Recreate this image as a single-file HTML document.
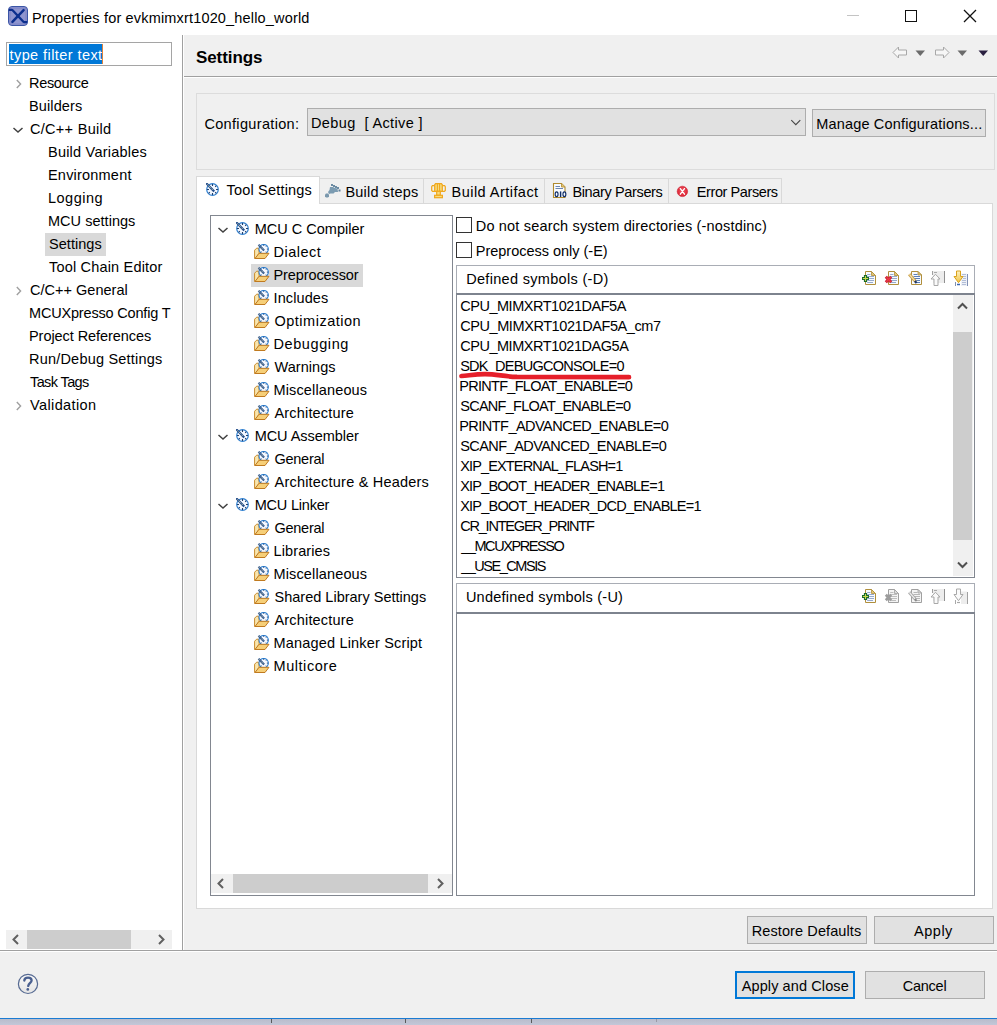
<!DOCTYPE html><html><head><meta charset="utf-8"><style>html,body{margin:0;padding:0;width:997px;height:1025px;overflow:hidden;position:relative;font-family:"Liberation Sans",sans-serif;}.t{position:absolute;white-space:pre;line-height:20px;z-index:5;}</style></head><body>
<div style="position:absolute;left:0px;top:0px;width:997px;height:35px;background:#ffffff;z-index:0;"></div>
<div style="position:absolute;left:0px;top:35px;width:997px;height:983px;background:#f0f0f0;z-index:0;"></div>
<div style="position:absolute;left:0px;top:35px;width:182px;height:915px;background:#ffffff;z-index:0;"></div>
<div style="position:absolute;left:182px;top:35px;width:1px;height:915px;background:#a0a0a0;z-index:1;"></div>
<div style="position:absolute;left:0px;top:950px;width:997px;height:1px;background:#a0a0a0;z-index:1;"></div>
<div style="position:absolute;left:0px;top:951px;width:997px;height:1px;background:#ffffff;z-index:1;"></div>
<div style="position:absolute;left:183px;top:35px;width:1px;height:915px;background:#ffffff;z-index:1;"></div>
<div style="position:absolute;left:0px;top:1018px;width:997px;height:1px;background:#1a7bd3;z-index:1;"></div>
<div style="position:absolute;left:0px;top:1019px;width:997px;height:6px;background:linear-gradient(#b9bccb,#c3c7d8);z-index:1;"></div>
<div style="position:absolute;left:271px;top:1019px;width:1px;height:4px;background:#5a5a5a;z-index:2;"></div>
<div style="position:absolute;left:405px;top:1019px;width:1px;height:4px;background:#5a5a5a;z-index:2;"></div>
<div style="position:absolute;left:531px;top:1019px;width:1px;height:4px;background:#5a5a5a;z-index:2;"></div>
<div style="position:absolute;left:656px;top:1019px;width:1px;height:3px;background:#9a9aa6;z-index:2;"></div>
<svg style="position:absolute;left:8px;top:6px;z-index:4" width="20" height="20" viewBox="0 0 20 20"><rect x="0.5" y="0.5" width="19" height="19" rx="3.5" fill="#8f95cf" stroke="#3b55a6" stroke-width="1"/>
<rect x="2" y="2" width="16" height="16" rx="2" fill="none" stroke="#7a82c4" stroke-width="1"/>
<path d="M0.8 3.8 L3.6 3.8 L4.6 4.3 L15.4 15.7 L16.4 16.2 L19.2 16.2" fill="none" stroke="#0c2f8e" stroke-width="2.3" stroke-linejoin="round"/>
<path d="M15.6 4.2 L4.4 15.8" fill="none" stroke="#0c2f8e" stroke-width="2.5" stroke-linecap="round"/></svg>
<div style="position:absolute;left:847px;top:15px;width:12px;height:1px;background:#c4c4c4;z-index:3;"></div>
<div style="position:absolute;left:905px;top:10px;width:12px;height:12px;border:1.3px solid #111;box-sizing:border-box;z-index:3;"></div>
<svg style="position:absolute;left:963px;top:9px;z-index:4" width="14" height="14" viewBox="0 0 14 14"><path d="M1 1 L13 13 M13 1 L1 13" stroke="#111" stroke-width="1.3"/></svg>
<div style="position:absolute;left:6px;top:42px;width:166px;height:24px;background:#fff;border:1px solid #a5a5a5;box-sizing:border-box;z-index:2;"></div>
<div style="position:absolute;left:9px;top:44px;width:94px;height:20px;background:#0078d7;z-index:3;"></div>
<div style="position:absolute;left:102px;top:44px;width:1px;height:20px;background:#e0813a;z-index:3;"></div>
<svg style="position:absolute;left:14.5px;top:78px;z-index:4" width="8" height="12" viewBox="0 0 8 12"><path d="M1.8 2 L5.6 6 L1.8 10" fill="none" stroke="#a0a0a0" stroke-width="1.4"/></svg>
<svg style="position:absolute;left:12.3px;top:125.5px;z-index:4" width="12" height="8" viewBox="0 0 12 8"><path d="M1.5 2 L6 6 L10.5 2" fill="none" stroke="#404040" stroke-width="1.5"/></svg>
<div style="position:absolute;left:45px;top:233px;width:61px;height:23px;background:#d9d9d9;z-index:2;"></div>
<svg style="position:absolute;left:14.5px;top:285px;z-index:4" width="8" height="12" viewBox="0 0 8 12"><path d="M1.8 2 L5.6 6 L1.8 10" fill="none" stroke="#a0a0a0" stroke-width="1.4"/></svg>
<svg style="position:absolute;left:14.5px;top:400px;z-index:4" width="8" height="12" viewBox="0 0 8 12"><path d="M1.8 2 L5.6 6 L1.8 10" fill="none" stroke="#a0a0a0" stroke-width="1.4"/></svg>
<div style="position:absolute;left:6px;top:930px;width:166px;height:19px;background:#f0f0f0;z-index:2;"></div>
<div style="position:absolute;left:27px;top:930px;width:104px;height:19px;background:#cdcdcd;z-index:3;"></div>
<svg style="position:absolute;left:10px;top:933px;z-index:4" width="12" height="13" viewBox="0 0 12 13"><path d="M8 2 L3.5 6.5 L8 11" fill="none" stroke="#606060" stroke-width="2"/></svg>
<svg style="position:absolute;left:155px;top:933px;z-index:4" width="12" height="13" viewBox="0 0 12 13"><path d="M4 2 L8.5 6.5 L4 11" fill="none" stroke="#606060" stroke-width="2"/></svg>
<svg style="position:absolute;left:17px;top:973px;z-index:4" width="22" height="22" viewBox="0 0 22 22"><defs><linearGradient id="hg" x1="0" y1="0" x2="0" y2="1"><stop offset="0" stop-color="#fafafa"/><stop offset="1" stop-color="#e4e4e4"/></linearGradient></defs>
<circle cx="11" cy="10.9" r="9.6" fill="url(#hg)" stroke="#566a92" stroke-width="1.2"/>
<path d="M7.3 7.6 C7.4 5.4 9 4.7 11 4.7 C13.2 4.7 14.6 5.9 14.6 7.5 C14.6 9.6 11.8 10.1 11.2 12.9" fill="none" stroke="#4a6090" stroke-width="2.3" stroke-linecap="round"/>
<circle cx="10.8" cy="16.4" r="1.35" fill="#4a6090"/></svg>
<svg style="position:absolute;left:892px;top:46px;z-index:4" width="16" height="14" viewBox="0 0 16 14"><path d="M1 6.5 L6.5 1 L6.5 4 L14.5 4 L14.5 9 L6.5 9 L6.5 12 Z" fill="#f6f6f6" stroke="#a8a8a8" stroke-width="1"/></svg>
<svg style="position:absolute;left:915px;top:50px;z-index:4" width="11" height="7" viewBox="0 0 11 7"><path d="M0.5 0.5 L10 0.5 L5.25 6 Z" fill="#6b6b6b"/></svg>
<svg style="position:absolute;left:934px;top:46px;z-index:4" width="16" height="14" viewBox="0 0 16 14"><path d="M15 6.5 L9.5 1 L9.5 4 L1.5 4 L1.5 9 L9.5 9 L9.5 12 Z" fill="#f6f6f6" stroke="#a8a8a8" stroke-width="1"/></svg>
<svg style="position:absolute;left:957px;top:50px;z-index:4" width="11" height="7" viewBox="0 0 11 7"><path d="M0.5 0.5 L10 0.5 L5.25 6 Z" fill="#6b6b6b"/></svg>
<svg style="position:absolute;left:978px;top:50px;z-index:4" width="11" height="7" viewBox="0 0 11 7"><path d="M0.5 0.5 L10 0.5 L5.25 6 Z" fill="#2a2040"/></svg>
<div style="position:absolute;left:184px;top:76px;width:813px;height:1px;background:#a0a0a0;z-index:2;"></div>
<div style="position:absolute;left:184px;top:77px;width:813px;height:1px;background:#ffffff;z-index:2;"></div>
<div style="position:absolute;left:196px;top:93px;width:799px;height:77px;border:1px solid #dcdcdc;box-sizing:border-box;z-index:2;"></div>
<div style="position:absolute;left:307px;top:108px;width:499px;height:28px;background:#e1e1e1;border:1px solid #adadad;box-sizing:border-box;z-index:2;"></div>
<svg style="position:absolute;left:790px;top:119px;z-index:4" width="12" height="8" viewBox="0 0 12 8"><path d="M1.3 1.2 L5.8 5.7 L10.3 1.2" fill="none" stroke="#444" stroke-width="1.1"/></svg>
<div style="position:absolute;left:812px;top:109px;width:174px;height:28px;background:#e1e1e1;border:1px solid #adadad;box-sizing:border-box;z-index:2;"></div>
<div style="position:absolute;left:196px;top:203px;width:797px;height:706px;background:#ffffff;border:1px solid #d9d9d9;box-sizing:border-box;z-index:1;"></div>
<div style="position:absolute;left:196px;top:176px;width:124px;height:28px;background:#ffffff;border:1px solid #d9d9d9;box-sizing:border-box;z-index:2;border-bottom:none;"></div>
<div style="position:absolute;left:319px;top:178px;width:105px;height:26px;background:#f0f0f0;border:1px solid #d9d9d9;box-sizing:border-box;z-index:1;"></div>
<div style="position:absolute;left:423px;top:178px;width:122px;height:26px;background:#f0f0f0;border:1px solid #d9d9d9;box-sizing:border-box;z-index:1;"></div>
<div style="position:absolute;left:544px;top:178px;width:125px;height:26px;background:#f0f0f0;border:1px solid #d9d9d9;box-sizing:border-box;z-index:1;"></div>
<div style="position:absolute;left:668px;top:178px;width:114px;height:26px;background:#f0f0f0;border:1px solid #d9d9d9;box-sizing:border-box;z-index:1;"></div>
<svg style="position:absolute;left:206px;top:183px;z-index:4" width="13" height="13" viewBox="0 0 13 13">
<circle cx="6.5" cy="6.5" r="5.8" fill="#f4f8ff" stroke="#2f7fcf" stroke-width="1.2"/>
<path d="M6.5 1 V3 M6.5 10 V12 M1 6.5 H3 M10 6.5 H12 M2.7 10.3 L3.8 9.2 M10.3 10.3 L9.2 9.2 M10.3 2.7 L9.2 3.8" stroke="#1f3f6e" stroke-width="1.1"/>
<path d="M1 1 L7.4 7.6" stroke="#27508c" stroke-width="2.3" stroke-linecap="square"/>
<path d="M1.6 1.6 L7 7.2" stroke="#efe9b4" stroke-width="1" stroke-dasharray="1 1"/>
</svg>
<svg style="position:absolute;left:324px;top:183px;z-index:4" width="17" height="16" viewBox="0 0 17 16"><path d="M1 11.5 L2 10.5 L4 10.5 L5 11.5 L5 13.5 L4 14.5 L2 14.5 L1 13.5 Z" fill="#7a98ad"/>
<path d="M4 9 L5.5 7 L6 4 L9 4 L11 5 L13.5 5.5 L14 9 L11 9 L9.5 10.5 L6.5 10.5 L5 11 Z" fill="#7b9bb1"/>
<rect x="7" y="1" width="2" height="2" fill="#6b8ba3"/><rect x="9" y="2" width="2" height="2" fill="#6b8ba3"/>
<rect x="11" y="3" width="2" height="2" fill="#6b8ba3"/><rect x="13" y="4" width="2" height="2" fill="#6b8ba3"/><rect x="14.5" y="6.5" width="2" height="2" fill="#5f7f99"/></svg>
<svg style="position:absolute;left:428px;top:180px;z-index:4" width="20" height="20" viewBox="0 0 20 20"><path d="M6.8 5.6 H4.4 L3.7 6.6 V10.4 L4.6 11.4 H6.8 M14.2 5.6 H16.6 L17.3 6.6 V10.4 L16.4 11.4 H14.2" fill="none" stroke="#f0a81e" stroke-width="1.25"/>
<path d="M7.6 3.6 H13.4 L14.3 4.8 V11.3 H6.7 V4.8 Z" fill="#f7dc7c" stroke="#f0a81e" stroke-width="1.25"/>
<path d="M9.4 4 V11 M11.6 4 V11" stroke="#f0a81e" stroke-width="1.1"/>
<rect x="8.7" y="11.3" width="3.6" height="4" fill="#f7dc7c" stroke="#f0a81e" stroke-width="1.2"/>
<rect x="6.6" y="15.3" width="7.8" height="2.4" fill="#f7dc7c" stroke="#f0a81e" stroke-width="1.2"/></svg>
<svg style="position:absolute;left:552px;top:182px;z-index:4" width="15" height="17" viewBox="0 0 15 17"><path d="M1.5 1.5 H9.5 L13 5 V15.5 H1.5 Z" fill="#f8fbff" stroke="#b08a2e" stroke-width="1.1"/>
<path d="M9.5 1.5 V5 H13" fill="#e6c77a" stroke="#b08a2e" stroke-width="0.8"/>
<path d="M3.5 4.5 H8 M3.5 6.5 H11" stroke="#5a77a8" stroke-width="0.9"/>
<ellipse cx="4.6" cy="12.2" rx="1.45" ry="2.35" fill="none" stroke="#0e2c66" stroke-width="1.15"/><rect x="7.9" y="9.4" width="1.4" height="5.6" fill="#0e2c66"/><ellipse cx="12.4" cy="12.2" rx="1.45" ry="2.35" fill="#f8fbff" stroke="#0e2c66" stroke-width="1.15"/></svg>
<svg style="position:absolute;left:676px;top:185px;z-index:4" width="13" height="13" viewBox="0 0 13 13"><defs><radialGradient id="eg" cx="0.5" cy="0.45" r="0.6"><stop offset="0" stop-color="#f25a66"/><stop offset="1" stop-color="#d81b2c"/></radialGradient></defs>
<circle cx="6.4" cy="6.4" r="5.2" fill="url(#eg)" stroke="#cc2030" stroke-width="0.6"/>
<path d="M4.3 3.6 L8.5 9.2 M8.5 3.6 L4.3 9.2" stroke="#fff" stroke-width="1.3" stroke-linecap="round"/></svg>
<div style="position:absolute;left:210px;top:215px;width:243px;height:681px;background:#ffffff;border:1px solid #828790;box-sizing:border-box;z-index:2;"></div>
<svg style="position:absolute;left:216.6px;top:225.5px;z-index:4" width="12" height="8" viewBox="0 0 12 8"><path d="M1.5 2 L6 6 L10.5 2" fill="none" stroke="#404040" stroke-width="1.5"/></svg>
<svg style="position:absolute;left:236px;top:222px;z-index:4" width="13" height="13" viewBox="0 0 13 13">
<circle cx="6.5" cy="6.5" r="5.8" fill="#f4f8ff" stroke="#2f7fcf" stroke-width="1.2"/>
<path d="M6.5 1 V3 M6.5 10 V12 M1 6.5 H3 M10 6.5 H12 M2.7 10.3 L3.8 9.2 M10.3 10.3 L9.2 9.2 M10.3 2.7 L9.2 3.8" stroke="#1f3f6e" stroke-width="1.1"/>
<path d="M1 1 L7.4 7.6" stroke="#27508c" stroke-width="2.3" stroke-linecap="square"/>
<path d="M1.6 1.6 L7 7.2" stroke="#efe9b4" stroke-width="1" stroke-dasharray="1 1"/>
</svg>
<svg style="position:absolute;left:254px;top:244px;z-index:4" width="16" height="16" viewBox="0 0 16 16">
<path d="M0.6 14.5 V6.2 L2.6 4.2 L4.6 4.2 L5.2 9.2 L1.5 14.5 Z" fill="#f9e6ae" stroke="#c98a2c" stroke-width="1"/>
<circle cx="9.7" cy="5.1" r="4.7" fill="#f6f9ff" stroke="#3586d6" stroke-width="1.1"/>
<path d="M9.7 0.6 V1.9 M14.2 5.1 H12.9 M6.6 8.4 L7.4 7.6 M12.8 8.4 L12 7.6 M12.8 1.8 L12 2.6" stroke="#1f3f6e" stroke-width="0.9"/>
<path d="M1 14.5 L5 9.3 L15 9.3 L11 14.5 Z" fill="#f6cf78" stroke="#c07a20" stroke-width="1"/>
<path d="M4.5 0.8 L10.1 6.5" stroke="#27508c" stroke-width="2.1"/>
<path d="M5 1.3 L9.7 6.1" stroke="#efe9b4" stroke-width="0.9" stroke-dasharray="1 1"/>
</svg>
<div style="position:absolute;left:251px;top:263.5px;width:112px;height:23px;background:#d9d9d9;z-index:3;"></div>
<svg style="position:absolute;left:254px;top:267px;z-index:4" width="16" height="16" viewBox="0 0 16 16">
<path d="M0.6 14.5 V6.2 L2.6 4.2 L4.6 4.2 L5.2 9.2 L1.5 14.5 Z" fill="#f9e6ae" stroke="#c98a2c" stroke-width="1"/>
<circle cx="9.7" cy="5.1" r="4.7" fill="#f6f9ff" stroke="#3586d6" stroke-width="1.1"/>
<path d="M9.7 0.6 V1.9 M14.2 5.1 H12.9 M6.6 8.4 L7.4 7.6 M12.8 8.4 L12 7.6 M12.8 1.8 L12 2.6" stroke="#1f3f6e" stroke-width="0.9"/>
<path d="M1 14.5 L5 9.3 L15 9.3 L11 14.5 Z" fill="#f6cf78" stroke="#c07a20" stroke-width="1"/>
<path d="M4.5 0.8 L10.1 6.5" stroke="#27508c" stroke-width="2.1"/>
<path d="M5 1.3 L9.7 6.1" stroke="#efe9b4" stroke-width="0.9" stroke-dasharray="1 1"/>
</svg>
<svg style="position:absolute;left:254px;top:290px;z-index:4" width="16" height="16" viewBox="0 0 16 16">
<path d="M0.6 14.5 V6.2 L2.6 4.2 L4.6 4.2 L5.2 9.2 L1.5 14.5 Z" fill="#f9e6ae" stroke="#c98a2c" stroke-width="1"/>
<circle cx="9.7" cy="5.1" r="4.7" fill="#f6f9ff" stroke="#3586d6" stroke-width="1.1"/>
<path d="M9.7 0.6 V1.9 M14.2 5.1 H12.9 M6.6 8.4 L7.4 7.6 M12.8 8.4 L12 7.6 M12.8 1.8 L12 2.6" stroke="#1f3f6e" stroke-width="0.9"/>
<path d="M1 14.5 L5 9.3 L15 9.3 L11 14.5 Z" fill="#f6cf78" stroke="#c07a20" stroke-width="1"/>
<path d="M4.5 0.8 L10.1 6.5" stroke="#27508c" stroke-width="2.1"/>
<path d="M5 1.3 L9.7 6.1" stroke="#efe9b4" stroke-width="0.9" stroke-dasharray="1 1"/>
</svg>
<svg style="position:absolute;left:254px;top:313px;z-index:4" width="16" height="16" viewBox="0 0 16 16">
<path d="M0.6 14.5 V6.2 L2.6 4.2 L4.6 4.2 L5.2 9.2 L1.5 14.5 Z" fill="#f9e6ae" stroke="#c98a2c" stroke-width="1"/>
<circle cx="9.7" cy="5.1" r="4.7" fill="#f6f9ff" stroke="#3586d6" stroke-width="1.1"/>
<path d="M9.7 0.6 V1.9 M14.2 5.1 H12.9 M6.6 8.4 L7.4 7.6 M12.8 8.4 L12 7.6 M12.8 1.8 L12 2.6" stroke="#1f3f6e" stroke-width="0.9"/>
<path d="M1 14.5 L5 9.3 L15 9.3 L11 14.5 Z" fill="#f6cf78" stroke="#c07a20" stroke-width="1"/>
<path d="M4.5 0.8 L10.1 6.5" stroke="#27508c" stroke-width="2.1"/>
<path d="M5 1.3 L9.7 6.1" stroke="#efe9b4" stroke-width="0.9" stroke-dasharray="1 1"/>
</svg>
<svg style="position:absolute;left:254px;top:336px;z-index:4" width="16" height="16" viewBox="0 0 16 16">
<path d="M0.6 14.5 V6.2 L2.6 4.2 L4.6 4.2 L5.2 9.2 L1.5 14.5 Z" fill="#f9e6ae" stroke="#c98a2c" stroke-width="1"/>
<circle cx="9.7" cy="5.1" r="4.7" fill="#f6f9ff" stroke="#3586d6" stroke-width="1.1"/>
<path d="M9.7 0.6 V1.9 M14.2 5.1 H12.9 M6.6 8.4 L7.4 7.6 M12.8 8.4 L12 7.6 M12.8 1.8 L12 2.6" stroke="#1f3f6e" stroke-width="0.9"/>
<path d="M1 14.5 L5 9.3 L15 9.3 L11 14.5 Z" fill="#f6cf78" stroke="#c07a20" stroke-width="1"/>
<path d="M4.5 0.8 L10.1 6.5" stroke="#27508c" stroke-width="2.1"/>
<path d="M5 1.3 L9.7 6.1" stroke="#efe9b4" stroke-width="0.9" stroke-dasharray="1 1"/>
</svg>
<svg style="position:absolute;left:254px;top:359px;z-index:4" width="16" height="16" viewBox="0 0 16 16">
<path d="M0.6 14.5 V6.2 L2.6 4.2 L4.6 4.2 L5.2 9.2 L1.5 14.5 Z" fill="#f9e6ae" stroke="#c98a2c" stroke-width="1"/>
<circle cx="9.7" cy="5.1" r="4.7" fill="#f6f9ff" stroke="#3586d6" stroke-width="1.1"/>
<path d="M9.7 0.6 V1.9 M14.2 5.1 H12.9 M6.6 8.4 L7.4 7.6 M12.8 8.4 L12 7.6 M12.8 1.8 L12 2.6" stroke="#1f3f6e" stroke-width="0.9"/>
<path d="M1 14.5 L5 9.3 L15 9.3 L11 14.5 Z" fill="#f6cf78" stroke="#c07a20" stroke-width="1"/>
<path d="M4.5 0.8 L10.1 6.5" stroke="#27508c" stroke-width="2.1"/>
<path d="M5 1.3 L9.7 6.1" stroke="#efe9b4" stroke-width="0.9" stroke-dasharray="1 1"/>
</svg>
<svg style="position:absolute;left:254px;top:382px;z-index:4" width="16" height="16" viewBox="0 0 16 16">
<path d="M0.6 14.5 V6.2 L2.6 4.2 L4.6 4.2 L5.2 9.2 L1.5 14.5 Z" fill="#f9e6ae" stroke="#c98a2c" stroke-width="1"/>
<circle cx="9.7" cy="5.1" r="4.7" fill="#f6f9ff" stroke="#3586d6" stroke-width="1.1"/>
<path d="M9.7 0.6 V1.9 M14.2 5.1 H12.9 M6.6 8.4 L7.4 7.6 M12.8 8.4 L12 7.6 M12.8 1.8 L12 2.6" stroke="#1f3f6e" stroke-width="0.9"/>
<path d="M1 14.5 L5 9.3 L15 9.3 L11 14.5 Z" fill="#f6cf78" stroke="#c07a20" stroke-width="1"/>
<path d="M4.5 0.8 L10.1 6.5" stroke="#27508c" stroke-width="2.1"/>
<path d="M5 1.3 L9.7 6.1" stroke="#efe9b4" stroke-width="0.9" stroke-dasharray="1 1"/>
</svg>
<svg style="position:absolute;left:254px;top:405px;z-index:4" width="16" height="16" viewBox="0 0 16 16">
<path d="M0.6 14.5 V6.2 L2.6 4.2 L4.6 4.2 L5.2 9.2 L1.5 14.5 Z" fill="#f9e6ae" stroke="#c98a2c" stroke-width="1"/>
<circle cx="9.7" cy="5.1" r="4.7" fill="#f6f9ff" stroke="#3586d6" stroke-width="1.1"/>
<path d="M9.7 0.6 V1.9 M14.2 5.1 H12.9 M6.6 8.4 L7.4 7.6 M12.8 8.4 L12 7.6 M12.8 1.8 L12 2.6" stroke="#1f3f6e" stroke-width="0.9"/>
<path d="M1 14.5 L5 9.3 L15 9.3 L11 14.5 Z" fill="#f6cf78" stroke="#c07a20" stroke-width="1"/>
<path d="M4.5 0.8 L10.1 6.5" stroke="#27508c" stroke-width="2.1"/>
<path d="M5 1.3 L9.7 6.1" stroke="#efe9b4" stroke-width="0.9" stroke-dasharray="1 1"/>
</svg>
<svg style="position:absolute;left:216.6px;top:432.5px;z-index:4" width="12" height="8" viewBox="0 0 12 8"><path d="M1.5 2 L6 6 L10.5 2" fill="none" stroke="#404040" stroke-width="1.5"/></svg>
<svg style="position:absolute;left:236px;top:429px;z-index:4" width="13" height="13" viewBox="0 0 13 13">
<circle cx="6.5" cy="6.5" r="5.8" fill="#f4f8ff" stroke="#2f7fcf" stroke-width="1.2"/>
<path d="M6.5 1 V3 M6.5 10 V12 M1 6.5 H3 M10 6.5 H12 M2.7 10.3 L3.8 9.2 M10.3 10.3 L9.2 9.2 M10.3 2.7 L9.2 3.8" stroke="#1f3f6e" stroke-width="1.1"/>
<path d="M1 1 L7.4 7.6" stroke="#27508c" stroke-width="2.3" stroke-linecap="square"/>
<path d="M1.6 1.6 L7 7.2" stroke="#efe9b4" stroke-width="1" stroke-dasharray="1 1"/>
</svg>
<svg style="position:absolute;left:254px;top:451px;z-index:4" width="16" height="16" viewBox="0 0 16 16">
<path d="M0.6 14.5 V6.2 L2.6 4.2 L4.6 4.2 L5.2 9.2 L1.5 14.5 Z" fill="#f9e6ae" stroke="#c98a2c" stroke-width="1"/>
<circle cx="9.7" cy="5.1" r="4.7" fill="#f6f9ff" stroke="#3586d6" stroke-width="1.1"/>
<path d="M9.7 0.6 V1.9 M14.2 5.1 H12.9 M6.6 8.4 L7.4 7.6 M12.8 8.4 L12 7.6 M12.8 1.8 L12 2.6" stroke="#1f3f6e" stroke-width="0.9"/>
<path d="M1 14.5 L5 9.3 L15 9.3 L11 14.5 Z" fill="#f6cf78" stroke="#c07a20" stroke-width="1"/>
<path d="M4.5 0.8 L10.1 6.5" stroke="#27508c" stroke-width="2.1"/>
<path d="M5 1.3 L9.7 6.1" stroke="#efe9b4" stroke-width="0.9" stroke-dasharray="1 1"/>
</svg>
<svg style="position:absolute;left:254px;top:474px;z-index:4" width="16" height="16" viewBox="0 0 16 16">
<path d="M0.6 14.5 V6.2 L2.6 4.2 L4.6 4.2 L5.2 9.2 L1.5 14.5 Z" fill="#f9e6ae" stroke="#c98a2c" stroke-width="1"/>
<circle cx="9.7" cy="5.1" r="4.7" fill="#f6f9ff" stroke="#3586d6" stroke-width="1.1"/>
<path d="M9.7 0.6 V1.9 M14.2 5.1 H12.9 M6.6 8.4 L7.4 7.6 M12.8 8.4 L12 7.6 M12.8 1.8 L12 2.6" stroke="#1f3f6e" stroke-width="0.9"/>
<path d="M1 14.5 L5 9.3 L15 9.3 L11 14.5 Z" fill="#f6cf78" stroke="#c07a20" stroke-width="1"/>
<path d="M4.5 0.8 L10.1 6.5" stroke="#27508c" stroke-width="2.1"/>
<path d="M5 1.3 L9.7 6.1" stroke="#efe9b4" stroke-width="0.9" stroke-dasharray="1 1"/>
</svg>
<svg style="position:absolute;left:216.6px;top:501.5px;z-index:4" width="12" height="8" viewBox="0 0 12 8"><path d="M1.5 2 L6 6 L10.5 2" fill="none" stroke="#404040" stroke-width="1.5"/></svg>
<svg style="position:absolute;left:236px;top:498px;z-index:4" width="13" height="13" viewBox="0 0 13 13">
<circle cx="6.5" cy="6.5" r="5.8" fill="#f4f8ff" stroke="#2f7fcf" stroke-width="1.2"/>
<path d="M6.5 1 V3 M6.5 10 V12 M1 6.5 H3 M10 6.5 H12 M2.7 10.3 L3.8 9.2 M10.3 10.3 L9.2 9.2 M10.3 2.7 L9.2 3.8" stroke="#1f3f6e" stroke-width="1.1"/>
<path d="M1 1 L7.4 7.6" stroke="#27508c" stroke-width="2.3" stroke-linecap="square"/>
<path d="M1.6 1.6 L7 7.2" stroke="#efe9b4" stroke-width="1" stroke-dasharray="1 1"/>
</svg>
<svg style="position:absolute;left:254px;top:520px;z-index:4" width="16" height="16" viewBox="0 0 16 16">
<path d="M0.6 14.5 V6.2 L2.6 4.2 L4.6 4.2 L5.2 9.2 L1.5 14.5 Z" fill="#f9e6ae" stroke="#c98a2c" stroke-width="1"/>
<circle cx="9.7" cy="5.1" r="4.7" fill="#f6f9ff" stroke="#3586d6" stroke-width="1.1"/>
<path d="M9.7 0.6 V1.9 M14.2 5.1 H12.9 M6.6 8.4 L7.4 7.6 M12.8 8.4 L12 7.6 M12.8 1.8 L12 2.6" stroke="#1f3f6e" stroke-width="0.9"/>
<path d="M1 14.5 L5 9.3 L15 9.3 L11 14.5 Z" fill="#f6cf78" stroke="#c07a20" stroke-width="1"/>
<path d="M4.5 0.8 L10.1 6.5" stroke="#27508c" stroke-width="2.1"/>
<path d="M5 1.3 L9.7 6.1" stroke="#efe9b4" stroke-width="0.9" stroke-dasharray="1 1"/>
</svg>
<svg style="position:absolute;left:254px;top:543px;z-index:4" width="16" height="16" viewBox="0 0 16 16">
<path d="M0.6 14.5 V6.2 L2.6 4.2 L4.6 4.2 L5.2 9.2 L1.5 14.5 Z" fill="#f9e6ae" stroke="#c98a2c" stroke-width="1"/>
<circle cx="9.7" cy="5.1" r="4.7" fill="#f6f9ff" stroke="#3586d6" stroke-width="1.1"/>
<path d="M9.7 0.6 V1.9 M14.2 5.1 H12.9 M6.6 8.4 L7.4 7.6 M12.8 8.4 L12 7.6 M12.8 1.8 L12 2.6" stroke="#1f3f6e" stroke-width="0.9"/>
<path d="M1 14.5 L5 9.3 L15 9.3 L11 14.5 Z" fill="#f6cf78" stroke="#c07a20" stroke-width="1"/>
<path d="M4.5 0.8 L10.1 6.5" stroke="#27508c" stroke-width="2.1"/>
<path d="M5 1.3 L9.7 6.1" stroke="#efe9b4" stroke-width="0.9" stroke-dasharray="1 1"/>
</svg>
<svg style="position:absolute;left:254px;top:566px;z-index:4" width="16" height="16" viewBox="0 0 16 16">
<path d="M0.6 14.5 V6.2 L2.6 4.2 L4.6 4.2 L5.2 9.2 L1.5 14.5 Z" fill="#f9e6ae" stroke="#c98a2c" stroke-width="1"/>
<circle cx="9.7" cy="5.1" r="4.7" fill="#f6f9ff" stroke="#3586d6" stroke-width="1.1"/>
<path d="M9.7 0.6 V1.9 M14.2 5.1 H12.9 M6.6 8.4 L7.4 7.6 M12.8 8.4 L12 7.6 M12.8 1.8 L12 2.6" stroke="#1f3f6e" stroke-width="0.9"/>
<path d="M1 14.5 L5 9.3 L15 9.3 L11 14.5 Z" fill="#f6cf78" stroke="#c07a20" stroke-width="1"/>
<path d="M4.5 0.8 L10.1 6.5" stroke="#27508c" stroke-width="2.1"/>
<path d="M5 1.3 L9.7 6.1" stroke="#efe9b4" stroke-width="0.9" stroke-dasharray="1 1"/>
</svg>
<svg style="position:absolute;left:254px;top:589px;z-index:4" width="16" height="16" viewBox="0 0 16 16">
<path d="M0.6 14.5 V6.2 L2.6 4.2 L4.6 4.2 L5.2 9.2 L1.5 14.5 Z" fill="#f9e6ae" stroke="#c98a2c" stroke-width="1"/>
<circle cx="9.7" cy="5.1" r="4.7" fill="#f6f9ff" stroke="#3586d6" stroke-width="1.1"/>
<path d="M9.7 0.6 V1.9 M14.2 5.1 H12.9 M6.6 8.4 L7.4 7.6 M12.8 8.4 L12 7.6 M12.8 1.8 L12 2.6" stroke="#1f3f6e" stroke-width="0.9"/>
<path d="M1 14.5 L5 9.3 L15 9.3 L11 14.5 Z" fill="#f6cf78" stroke="#c07a20" stroke-width="1"/>
<path d="M4.5 0.8 L10.1 6.5" stroke="#27508c" stroke-width="2.1"/>
<path d="M5 1.3 L9.7 6.1" stroke="#efe9b4" stroke-width="0.9" stroke-dasharray="1 1"/>
</svg>
<svg style="position:absolute;left:254px;top:612px;z-index:4" width="16" height="16" viewBox="0 0 16 16">
<path d="M0.6 14.5 V6.2 L2.6 4.2 L4.6 4.2 L5.2 9.2 L1.5 14.5 Z" fill="#f9e6ae" stroke="#c98a2c" stroke-width="1"/>
<circle cx="9.7" cy="5.1" r="4.7" fill="#f6f9ff" stroke="#3586d6" stroke-width="1.1"/>
<path d="M9.7 0.6 V1.9 M14.2 5.1 H12.9 M6.6 8.4 L7.4 7.6 M12.8 8.4 L12 7.6 M12.8 1.8 L12 2.6" stroke="#1f3f6e" stroke-width="0.9"/>
<path d="M1 14.5 L5 9.3 L15 9.3 L11 14.5 Z" fill="#f6cf78" stroke="#c07a20" stroke-width="1"/>
<path d="M4.5 0.8 L10.1 6.5" stroke="#27508c" stroke-width="2.1"/>
<path d="M5 1.3 L9.7 6.1" stroke="#efe9b4" stroke-width="0.9" stroke-dasharray="1 1"/>
</svg>
<svg style="position:absolute;left:254px;top:635px;z-index:4" width="16" height="16" viewBox="0 0 16 16">
<path d="M0.6 14.5 V6.2 L2.6 4.2 L4.6 4.2 L5.2 9.2 L1.5 14.5 Z" fill="#f9e6ae" stroke="#c98a2c" stroke-width="1"/>
<circle cx="9.7" cy="5.1" r="4.7" fill="#f6f9ff" stroke="#3586d6" stroke-width="1.1"/>
<path d="M9.7 0.6 V1.9 M14.2 5.1 H12.9 M6.6 8.4 L7.4 7.6 M12.8 8.4 L12 7.6 M12.8 1.8 L12 2.6" stroke="#1f3f6e" stroke-width="0.9"/>
<path d="M1 14.5 L5 9.3 L15 9.3 L11 14.5 Z" fill="#f6cf78" stroke="#c07a20" stroke-width="1"/>
<path d="M4.5 0.8 L10.1 6.5" stroke="#27508c" stroke-width="2.1"/>
<path d="M5 1.3 L9.7 6.1" stroke="#efe9b4" stroke-width="0.9" stroke-dasharray="1 1"/>
</svg>
<svg style="position:absolute;left:254px;top:658px;z-index:4" width="16" height="16" viewBox="0 0 16 16">
<path d="M0.6 14.5 V6.2 L2.6 4.2 L4.6 4.2 L5.2 9.2 L1.5 14.5 Z" fill="#f9e6ae" stroke="#c98a2c" stroke-width="1"/>
<circle cx="9.7" cy="5.1" r="4.7" fill="#f6f9ff" stroke="#3586d6" stroke-width="1.1"/>
<path d="M9.7 0.6 V1.9 M14.2 5.1 H12.9 M6.6 8.4 L7.4 7.6 M12.8 8.4 L12 7.6 M12.8 1.8 L12 2.6" stroke="#1f3f6e" stroke-width="0.9"/>
<path d="M1 14.5 L5 9.3 L15 9.3 L11 14.5 Z" fill="#f6cf78" stroke="#c07a20" stroke-width="1"/>
<path d="M4.5 0.8 L10.1 6.5" stroke="#27508c" stroke-width="2.1"/>
<path d="M5 1.3 L9.7 6.1" stroke="#efe9b4" stroke-width="0.9" stroke-dasharray="1 1"/>
</svg>
<div style="position:absolute;left:211px;top:874px;width:241px;height:19px;background:#f0f0f0;z-index:3;"></div>
<div style="position:absolute;left:233px;top:874px;width:195px;height:19px;background:#cdcdcd;z-index:3;"></div>
<svg style="position:absolute;left:215px;top:877px;z-index:4" width="12" height="13" viewBox="0 0 12 13"><path d="M8 2 L3.5 6.5 L8 11" fill="none" stroke="#606060" stroke-width="2"/></svg>
<svg style="position:absolute;left:434px;top:877px;z-index:4" width="12" height="13" viewBox="0 0 12 13"><path d="M4 2 L8.5 6.5 L4 11" fill="none" stroke="#606060" stroke-width="2"/></svg>
<div style="position:absolute;left:456px;top:217px;width:16px;height:16px;background:#fff;border:1px solid #333333;box-sizing:border-box;z-index:3;"></div>
<div style="position:absolute;left:456px;top:242px;width:16px;height:16px;background:#fff;border:1px solid #333333;box-sizing:border-box;z-index:3;"></div>
<div style="position:absolute;left:456px;top:265px;width:519px;height:29px;background:#fff;border:1px solid #a9adb5;box-sizing:border-box;z-index:3;border-bottom:none;"></div>
<div style="position:absolute;left:456px;top:293px;width:519px;height:285px;background:#fff;border:1px solid #828790;box-sizing:border-box;z-index:3;border-top:2px solid #7d838e;"></div>
<div style="position:absolute;left:953px;top:295px;width:20px;height:281px;background:#f0f0f0;z-index:4;"></div>
<div style="position:absolute;left:953px;top:332px;width:19px;height:208px;background:#cdcdcd;z-index:4;"></div>
<svg style="position:absolute;left:956px;top:300px;z-index:4" width="13" height="12" viewBox="0 0 13 12"><path d="M2 8.5 L6.5 4 L11 8.5" fill="none" stroke="#505050" stroke-width="2"/></svg>
<svg style="position:absolute;left:956px;top:559px;z-index:4" width="13" height="12" viewBox="0 0 13 12"><path d="M2 3.5 L6.5 8 L11 3.5" fill="none" stroke="#505050" stroke-width="2"/></svg>
<svg style="position:absolute;left:455px;top:366px;z-index:8" width="180" height="16" viewBox="0 0 180 16"><path d="M6.5 10 C14 9.5 20 8.2 30 8.2 C42 8.2 48 10.5 62 10.9 C80 11.3 120 11.2 174 11.2" fill="none" stroke="#e61f2a" stroke-width="4.7" stroke-linecap="round"/></svg>
<div style="position:absolute;left:456px;top:583px;width:519px;height:30px;background:#fff;border:1px solid #a9adb5;box-sizing:border-box;z-index:3;border-bottom:none;"></div>
<div style="position:absolute;left:456px;top:612px;width:519px;height:284px;background:#fff;border:1px solid #828790;box-sizing:border-box;z-index:3;border-top:2px solid #7d838e;"></div>
<svg style="position:absolute;left:861px;top:270px;z-index:5" width="16" height="16" viewBox="0 0 16 16">
<path d="M4.5 1.5 H10.5 L14.5 5.5 V14.5 H4.5 Z" fill="#f8fbff" stroke="#b08f3c" stroke-width="1"/>
<path d="M10.5 1.5 V5.5 H14.5 Z" fill="#e2c577" stroke="#b08f3c" stroke-width="0.8"/>
<path d="M6.2 4.5 H9.5 M6.2 6.5 H13 M6.2 8.5 H13 M6.2 10.5 H13 M6.2 12.5 H12" stroke="#8aa0c8" stroke-width="0.9"/>
<path d="M1 8.5 H8 M4.5 5 V12" stroke="#17692a" stroke-width="3.2"/><path d="M1.9 8.5 H7.1 M4.5 5.9 V11.1" stroke="#c9d94e" stroke-width="1.1"/></svg>
<svg style="position:absolute;left:884px;top:270px;z-index:5" width="16" height="16" viewBox="0 0 16 16">
<path d="M4.5 1.5 H10.5 L14.5 5.5 V14.5 H4.5 Z" fill="#f8fbff" stroke="#b08f3c" stroke-width="1"/>
<path d="M10.5 1.5 V5.5 H14.5 Z" fill="#e2c577" stroke="#b08f3c" stroke-width="0.8"/>
<path d="M6.2 4.5 H9.5 M6.2 6.5 H13 M6.2 8.5 H13 M6.2 10.5 H13 M6.2 12.5 H12" stroke="#8aa0c8" stroke-width="0.9"/>
<path d="M1.8 6.8 L7.2 12.2 M7.2 6.8 L1.8 12.2" stroke="#c81e30" stroke-width="3"/><path d="M2.3 7.3 L6.7 11.7 M6.7 7.3 L2.3 11.7" stroke="#ec3a48" stroke-width="1.3"/></svg>
<svg style="position:absolute;left:908px;top:270px;z-index:5" width="16" height="16" viewBox="0 0 16 16">
<path d="M3.5 1.5 H10 L13.5 5 V14.5 H3.5 Z" fill="#f8fbff" stroke="#b08f3c" stroke-width="1"/>
<path d="M10 1.5 V5 H13.5 Z" fill="#e2c577" stroke="#b08f3c" stroke-width="0.8"/>
<path d="M5.5 4.5 H9.5 M5.5 6.5 H12 M5.5 8.5 H12 M5.5 10.5 H12 M9 12.5 H12" stroke="#4a70b0" stroke-width="0.9"/>
<path d="M1.2 4.2 L7.6 11.6" stroke="#c9a04a" stroke-width="3.1"/><path d="M1.4 4.4 L7.4 11.4" stroke="#f6e0a6" stroke-width="1.3"/><path d="M6.8 11 L8.6 13" stroke="#1d3566" stroke-width="2.2"/></svg>
<svg style="position:absolute;left:930px;top:270px;z-index:5" width="16" height="17" viewBox="0 0 16 17"><rect x="3" y="1" width="11" height="12" fill="#ededed"/><path d="M2.5 1 V5" stroke="#a0a0a0" stroke-width="1"/><path d="M4 2.5 H7" stroke="#a8a8a8" stroke-width="1"/><path d="M14.5 1 V13" stroke="#909090" stroke-width="1"/>
<path d="M5.5 4.3 L10 9 H8 V15.5 H4 V9 H1 Z" fill="#fafafa" stroke="#a8a8a8" stroke-width="1"/></svg>
<svg style="position:absolute;left:953px;top:270px;z-index:5" width="16" height="17" viewBox="0 0 16 17"><defs><linearGradient id="dg" x1="0" y1="0" x2="0" y2="1"><stop offset="0" stop-color="#fdf1c0"/><stop offset="1" stop-color="#f0c445"/></linearGradient></defs>
<rect x="8" y="3.5" width="6" height="12.5" fill="#eef1f7"/><path d="M9 4.5 H13 M10 6.5 H13 M10 8.5 H13 M9 10.5 H13 M9 12.5 H13 M9 14.5 H13" stroke="#aab8d4" stroke-width="0.9"/>
<path d="M14.5 4 V16" stroke="#7f8fb5" stroke-width="1"/><path d="M2.5 12 V16" stroke="#8090b0" stroke-width="1"/><path d="M4 14.5 H7" stroke="#3a66b0" stroke-width="1.5"/>
<path d="M3.5 1 H7.5 V6.5 H10 L5.5 12.7 L1 6.5 H3.5 Z" fill="url(#dg)" stroke="#d9a21c" stroke-width="1"/></svg>
<svg style="position:absolute;left:861px;top:588px;z-index:5" width="16" height="16" viewBox="0 0 16 16">
<path d="M4.5 1.5 H10.5 L14.5 5.5 V14.5 H4.5 Z" fill="#f8fbff" stroke="#b08f3c" stroke-width="1"/>
<path d="M10.5 1.5 V5.5 H14.5 Z" fill="#e2c577" stroke="#b08f3c" stroke-width="0.8"/>
<path d="M6.2 4.5 H9.5 M6.2 6.5 H13 M6.2 8.5 H13 M6.2 10.5 H13 M6.2 12.5 H12" stroke="#8aa0c8" stroke-width="0.9"/>
<path d="M1 8.5 H8 M4.5 5 V12" stroke="#17692a" stroke-width="3.2"/><path d="M1.9 8.5 H7.1 M4.5 5.9 V11.1" stroke="#c9d94e" stroke-width="1.1"/></svg>
<svg style="position:absolute;left:884px;top:588px;z-index:5" width="16" height="16" viewBox="0 0 16 16">
<path d="M4.5 1.5 H10.5 L14.5 5.5 V14.5 H4.5 Z" fill="#f4f4f4" stroke="#a0a0a0" stroke-width="1"/>
<path d="M10.5 1.5 V5.5 H14.5 Z" fill="#dcdcdc" stroke="#a0a0a0" stroke-width="0.8"/>
<path d="M6.2 4.5 H9.5 M6.2 6.5 H13 M6.2 8.5 H13 M6.2 10.5 H13 M6.2 12.5 H12" stroke="#b8b8b8" stroke-width="0.9"/>
<path d="M1.8 6.8 L7.2 12.2 M7.2 6.8 L1.8 12.2" stroke="#9c9c9c" stroke-width="2.8"/></svg>
<svg style="position:absolute;left:908px;top:588px;z-index:5" width="16" height="16" viewBox="0 0 16 16">
<path d="M3.5 1.5 H10 L13.5 5 V14.5 H3.5 Z" fill="#f4f4f4" stroke="#a0a0a0" stroke-width="1"/>
<path d="M10 1.5 V5 H13.5 Z" fill="#dcdcdc" stroke="#a0a0a0" stroke-width="0.8"/>
<path d="M5.5 4.5 H9.5 M5.5 6.5 H12 M5.5 8.5 H12 M5.5 10.5 H12 M9 12.5 H12" stroke="#b0b0b0" stroke-width="0.9"/>
<path d="M1.2 4.2 L7.6 11.6" stroke="#a8a8a8" stroke-width="3.1"/><path d="M1.4 4.4 L7.4 11.4" stroke="#eeeeee" stroke-width="1.3"/><path d="M6.8 11 L8.6 13" stroke="#8a8a8a" stroke-width="2"/></svg>
<svg style="position:absolute;left:930px;top:588px;z-index:5" width="16" height="17" viewBox="0 0 16 17"><rect x="3" y="1" width="11" height="12" fill="#ededed"/><path d="M2.5 1 V5" stroke="#a0a0a0" stroke-width="1"/><path d="M4 2.5 H7" stroke="#a8a8a8" stroke-width="1"/><path d="M14.5 1 V13" stroke="#909090" stroke-width="1"/>
<path d="M5.5 4.3 L10 9 H8 V15.5 H4 V9 H1 Z" fill="#fafafa" stroke="#a8a8a8" stroke-width="1"/></svg>
<svg style="position:absolute;left:953px;top:588px;z-index:5" width="16" height="17" viewBox="0 0 16 17"><rect x="8" y="3.5" width="6" height="12.5" fill="#ededed"/><path d="M14.5 4 V16" stroke="#a0a0a0" stroke-width="1"/><path d="M2.5 12 V16" stroke="#a8a8a8" stroke-width="1"/><path d="M4 14.5 H7" stroke="#a8a8a8" stroke-width="1.2"/>
<path d="M3.5 1 H7.5 V6.5 H10 L5.5 12.7 L1 6.5 H3.5 Z" fill="#fafafa" stroke="#a8a8a8" stroke-width="1"/></svg>
<div style="position:absolute;left:747px;top:916px;width:120px;height:28px;background:#e1e1e1;border:1px solid #adadad;box-sizing:border-box;z-index:2;"></div>
<div style="position:absolute;left:874px;top:916px;width:120px;height:28px;background:#e1e1e1;border:1px solid #adadad;box-sizing:border-box;z-index:2;"></div>
<div style="position:absolute;left:735px;top:971px;width:120px;height:28px;background:#e1e1e1;border:2px solid #0078d7;box-sizing:border-box;z-index:2;"></div>
<div style="position:absolute;left:865px;top:971px;width:120px;height:28px;background:#e1e1e1;border:1px solid #adadad;box-sizing:border-box;z-index:2;"></div>
<div class="t" style="left:32.00px;top:7.60px;font-size:14.5px;color:#000;letter-spacing:0.169px;">Properties for evkmimxrt1020_hello_world</div>
<div class="t" style="left:9.50px;top:44.50px;font-size:14.5px;color:#fff;letter-spacing:0.427px;">type filter text</div>
<div class="t" style="left:29.00px;top:73.00px;font-size:14.5px;color:#000;letter-spacing:-0.328px;">Resource</div>
<div class="t" style="left:29.00px;top:96.00px;font-size:14.5px;color:#000;letter-spacing:0.124px;">Builders</div>
<div class="t" style="left:30.00px;top:119.00px;font-size:14.5px;color:#000;letter-spacing:0.289px;">C/C++ Build</div>
<div class="t" style="left:48.00px;top:142.00px;font-size:14.5px;color:#000;letter-spacing:0.222px;">Build Variables</div>
<div class="t" style="left:48.00px;top:165.00px;font-size:14.5px;color:#000;letter-spacing:0.203px;">Environment</div>
<div class="t" style="left:48.00px;top:188.00px;font-size:14.5px;color:#000;letter-spacing:0.493px;">Logging</div>
<div class="t" style="left:48.00px;top:211.00px;font-size:14.5px;color:#000;letter-spacing:0.030px;">MCU settings</div>
<div class="t" style="left:49.00px;top:234.00px;font-size:14.5px;color:#000;letter-spacing:0.037px;">Settings</div>
<div class="t" style="left:49.00px;top:257.00px;font-size:14.5px;color:#000;letter-spacing:0.182px;">Tool Chain Editor</div>
<div class="t" style="left:30.00px;top:280.00px;font-size:14.5px;color:#000;letter-spacing:0.017px;">C/C++ General</div>
<div class="t" style="left:29.00px;top:303.00px;font-size:14.5px;color:#000;letter-spacing:-0.177px;width:143px;overflow:hidden;">MCUXpresso Config T</div>
<div class="t" style="left:29.00px;top:326.00px;font-size:14.5px;color:#000;letter-spacing:-0.062px;">Project References</div>
<div class="t" style="left:29.00px;top:349.00px;font-size:14.5px;color:#000;letter-spacing:0.204px;">Run/Debug Settings</div>
<div class="t" style="left:30.00px;top:372.00px;font-size:14.5px;color:#000;letter-spacing:-0.615px;">Task Tags</div>
<div class="t" style="left:30.00px;top:395.00px;font-size:14.5px;color:#000;letter-spacing:0.384px;">Validation</div>
<div class="t" style="left:196.00px;top:47.60px;font-size:17px;color:#000;font-weight:bold;letter-spacing:-0.087px;">Settings</div>
<div class="t" style="left:204.40px;top:114.00px;font-size:14.5px;color:#000;letter-spacing:0.335px;">Configuration:</div>
<div class="t" style="left:311.00px;top:112.80px;font-size:14.5px;color:#000;letter-spacing:0.371px;">Debug  [ Active ]</div>
<div class="t" style="left:816.20px;top:113.50px;font-size:14.5px;color:#000;letter-spacing:0.175px;">Manage Configurations...</div>
<div class="t" style="left:226.50px;top:179.80px;font-size:14.5px;color:#000;letter-spacing:0.194px;">Tool Settings</div>
<div class="t" style="left:345.50px;top:181.60px;font-size:14.5px;color:#000;letter-spacing:0.182px;">Build steps</div>
<div class="t" style="left:451.60px;top:181.60px;font-size:14.5px;color:#000;letter-spacing:0.457px;">Build Artifact</div>
<div class="t" style="left:572.40px;top:181.60px;font-size:14.5px;color:#000;letter-spacing:-0.357px;">Binary Parsers</div>
<div class="t" style="left:696.80px;top:181.60px;font-size:14.5px;color:#000;letter-spacing:-0.413px;">Error Parsers</div>
<div class="t" style="left:254.70px;top:219.00px;font-size:14.5px;color:#000;letter-spacing:0.005px;">MCU C Compiler</div>
<div class="t" style="left:273.50px;top:242.00px;font-size:14.5px;color:#000;letter-spacing:0.485px;">Dialect</div>
<div class="t" style="left:273.50px;top:265.00px;font-size:14.5px;color:#000;letter-spacing:-0.100px;">Preprocessor</div>
<div class="t" style="left:273.50px;top:288.00px;font-size:14.5px;color:#000;letter-spacing:0.106px;">Includes</div>
<div class="t" style="left:274.50px;top:311.00px;font-size:14.5px;color:#000;letter-spacing:0.498px;">Optimization</div>
<div class="t" style="left:273.50px;top:334.00px;font-size:14.5px;color:#000;letter-spacing:0.590px;">Debugging</div>
<div class="t" style="left:274.50px;top:357.00px;font-size:14.5px;color:#000;letter-spacing:0.049px;">Warnings</div>
<div class="t" style="left:273.50px;top:380.00px;font-size:14.5px;color:#000;letter-spacing:0.139px;">Miscellaneous</div>
<div class="t" style="left:274.50px;top:403.00px;font-size:14.5px;color:#000;letter-spacing:0.173px;">Architecture</div>
<div class="t" style="left:254.70px;top:426.00px;font-size:14.5px;color:#000;letter-spacing:-0.060px;">MCU Assembler</div>
<div class="t" style="left:274.50px;top:449.00px;font-size:14.5px;color:#000;letter-spacing:-0.261px;">General</div>
<div class="t" style="left:274.50px;top:472.00px;font-size:14.5px;color:#000;letter-spacing:0.212px;">Architecture &amp; Headers</div>
<div class="t" style="left:254.70px;top:495.00px;font-size:14.5px;color:#000;letter-spacing:-0.202px;">MCU Linker</div>
<div class="t" style="left:274.50px;top:518.00px;font-size:14.5px;color:#000;letter-spacing:-0.261px;">General</div>
<div class="t" style="left:273.50px;top:541.00px;font-size:14.5px;color:#000;letter-spacing:0.118px;">Libraries</div>
<div class="t" style="left:273.50px;top:564.00px;font-size:14.5px;color:#000;letter-spacing:0.139px;">Miscellaneous</div>
<div class="t" style="left:274.50px;top:587.00px;font-size:14.5px;color:#000;letter-spacing:0.006px;">Shared Library Settings</div>
<div class="t" style="left:274.50px;top:610.00px;font-size:14.5px;color:#000;letter-spacing:0.173px;">Architecture</div>
<div class="t" style="left:273.50px;top:633.00px;font-size:14.5px;color:#000;letter-spacing:0.178px;">Managed Linker Script</div>
<div class="t" style="left:273.50px;top:656.00px;font-size:14.5px;color:#000;letter-spacing:0.555px;">Multicore</div>
<div class="t" style="left:475.80px;top:215.70px;font-size:14.5px;color:#000;letter-spacing:0.171px;">Do not search system directories (-nostdinc)</div>
<div class="t" style="left:475.80px;top:240.60px;font-size:14.5px;color:#000;letter-spacing:-0.017px;">Preprocess only (-E)</div>
<div class="t" style="left:466.20px;top:268.80px;font-size:14.5px;color:#000;letter-spacing:0.314px;">Defined symbols (-D)</div>
<div class="t" style="left:460.20px;top:296.40px;font-size:14.5px;color:#000;letter-spacing:-0.468px;">CPU_MIMXRT1021DAF5A</div>
<div class="t" style="left:460.20px;top:316.40px;font-size:14.5px;color:#000;letter-spacing:-0.418px;">CPU_MIMXRT1021DAF5A_cm7</div>
<div class="t" style="left:460.20px;top:336.40px;font-size:14.5px;color:#000;letter-spacing:-0.464px;">CPU_MIMXRT1021DAG5A</div>
<div class="t" style="left:460.20px;top:356.40px;font-size:14.5px;color:#000;letter-spacing:-0.736px;">SDK_DEBUGCONSOLE=0</div>
<div class="t" style="left:459.20px;top:376.40px;font-size:14.5px;color:#000;letter-spacing:-0.711px;">PRINTF_FLOAT_ENABLE=0</div>
<div class="t" style="left:460.20px;top:396.40px;font-size:14.5px;color:#000;letter-spacing:-0.727px;">SCANF_FLOAT_ENABLE=0</div>
<div class="t" style="left:459.20px;top:416.40px;font-size:14.5px;color:#000;letter-spacing:-0.525px;">PRINTF_ADVANCED_ENABLE=0</div>
<div class="t" style="left:460.20px;top:436.40px;font-size:14.5px;color:#000;letter-spacing:-0.543px;">SCANF_ADVANCED_ENABLE=0</div>
<div class="t" style="left:460.20px;top:456.40px;font-size:14.5px;color:#000;letter-spacing:-0.855px;">XIP_EXTERNAL_FLASH=1</div>
<div class="t" style="left:460.20px;top:476.40px;font-size:14.5px;color:#000;letter-spacing:-0.786px;">XIP_BOOT_HEADER_ENABLE=1</div>
<div class="t" style="left:460.20px;top:496.40px;font-size:14.5px;color:#000;letter-spacing:-0.779px;">XIP_BOOT_HEADER_DCD_ENABLE=1</div>
<div class="t" style="left:460.20px;top:516.40px;font-size:14.5px;color:#000;letter-spacing:-1.201px;">CR_INTEGER_PRINTF</div>
<div class="t" style="left:461.20px;top:536.40px;font-size:14.5px;color:#000;letter-spacing:-1.425px;">__MCUXPRESSO</div>
<div class="t" style="left:461.20px;top:556.40px;font-size:14.5px;color:#000;letter-spacing:-1.476px;">__USE_CMSIS</div>
<div class="t" style="left:465.90px;top:586.60px;font-size:14.5px;color:#000;letter-spacing:0.225px;">Undefined symbols (-U)</div>
<div class="t" style="left:751.70px;top:920.80px;font-size:14.5px;color:#000;letter-spacing:0.104px;">Restore Defaults</div>
<div class="t" style="left:914.10px;top:920.90px;font-size:14.5px;color:#000;letter-spacing:0.495px;">Apply</div>
<div class="t" style="left:741.70px;top:975.50px;font-size:14.5px;color:#000;letter-spacing:0.105px;">Apply and Close</div>
<div class="t" style="left:902.80px;top:975.50px;font-size:14.5px;color:#000;letter-spacing:-0.263px;">Cancel</div>
</body></html>
